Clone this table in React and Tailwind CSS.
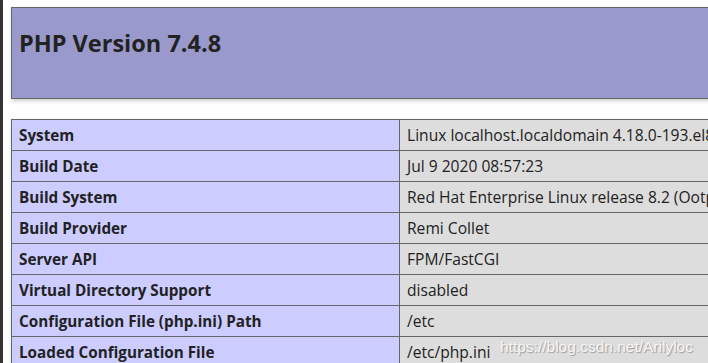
import React from 'react';

const rows = [
  ['System', 'Linux localhost.localdomain 4.18.0-193.el8.x86_64 #1 SMP Fri Mar 27 14:35:58 UTC 2020 x86_64'],
  ['Build Date', 'Jul 9 2020 08:57:23'],
  ['Build System', 'Red Hat Enterprise Linux release 8.2 (Ootpa)'],
  ['Build Provider', 'Remi Collet'],
  ['Server API', 'FPM/FastCGI'],
  ['Virtual Directory Support', 'disabled'],
  ['Configuration File (php.ini) Path', '/etc'],
  ['Loaded Configuration File', '/etc/php.ini'],
];

export default function App() {
  return (
    <div
      className="relative flex h-[363px] w-[708px] overflow-hidden bg-white text-[#222]"
      style={{ fontFamily: '"Open Sans", "Noto Sans", sans-serif' }}
    >
      {/* window edge */}
      <div className="w-[3px] shrink-0 bg-[#333]" />

      <div className="flex shrink-0 flex-col pl-[8px] pt-[7px]">
        {/* title */}
        <div className="h-[92px] w-[1168px] shrink-0 border border-[#666] bg-[#9999cc] pl-[7px] pt-[20px] shadow-[1px_2px_4px_#ccc]">
          <h1 className="text-[23.5px] font-bold leading-[30px] text-[#222]">PHP Version 7.4.8</h1>
        </div>

        {/* info table */}
        <table className="mt-[20px] w-[1168px] shrink-0 border-collapse shadow-[1px_2px_4px_#ccc]">
          <tbody>
            {rows.map(([k, v]) => (
              <tr key={k}>
                <td className="w-[388px] whitespace-nowrap border border-[#666] bg-[#ccccff] px-[7px] py-[5px] text-[15.25px] font-bold leading-[20px]">
                  {k}
                </td>
                <td className="whitespace-nowrap border border-[#666] bg-[#dddddd] px-[7px] py-[5px] text-[15.6px] leading-[20px]">
                  {v}
                </td>
              </tr>
            ))}
          </tbody>
        </table>
      </div>

      {/* watermark */}
      <div
        className="absolute left-[500px] top-[335px] text-[15.5px] text-[#f6f6f6] [text-shadow:1px_1px_1px_rgba(0,0,0,0.3)]"
        style={{ fontFamily: '"Liberation Sans", Arial, sans-serif' }}
      >
        https://blog.csdn.net/Arilyloc
      </div>
    </div>
  );
}
